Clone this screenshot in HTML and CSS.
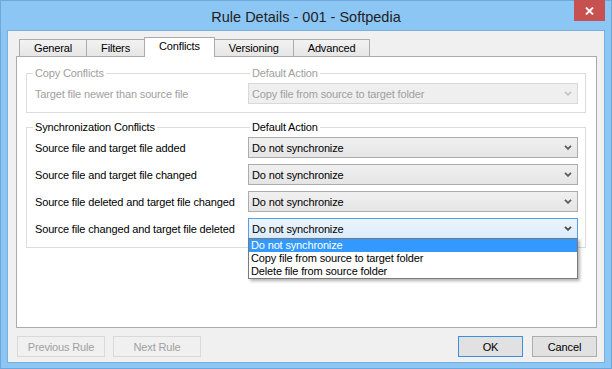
FILE: index.html
```html
<!DOCTYPE html>
<html>
<head>
<meta charset="utf-8">
<link rel="stylesheet" href="styles.css">
</head>
<body>
<div class="window">
  <div class="titlebar">
    <span class="tb-spacer"></span>
    <div class="title">Rule Details - 001 - Softpedia</div>
    <div class="close"><svg width="9" height="8" viewBox="0 0 9 8"><path d="M1 0.5 L8 7.5 M8 0.5 L1 7.5" stroke="#fff" stroke-width="1.8"/></svg></div>
  </div>
  <div class="client">
    <div class="tabs">
      <div class="tab">General</div>
      <div class="tab">Filters</div>
      <div class="tab active">Conflicts</div>
      <div class="tab">Versioning</div>
      <div class="tab">Advanced</div>
    </div>
    <div class="panel">
      <div class="group disabled">
        <div class="group-head"><span class="legend">Copy Conflicts</span><span class="legend col2">Default Action</span></div>
        <div class="row">
          <span class="label">Target file newer than source file</span>
          <div class="combo combo-disabled"><span>Copy file from source to target folder</span><svg class="chev" width="8" height="5" viewBox="0 0 8 5"><polyline points="1,0.8 4,3.8 7,0.8" fill="none" stroke="#c4c4c4" stroke-width="1.8"/></svg></div>
        </div>
      </div>
      <div class="group group2">
        <div class="group-head"><span class="legend">Synchronization Conflicts</span><span class="legend col2">Default Action</span></div>
        <div class="row">
          <span class="label">Source file and target file added</span>
          <div class="combo"><span>Do not synchronize</span><svg class="chev" width="8" height="5" viewBox="0 0 8 5"><polyline points="1,0.8 4,3.8 7,0.8" fill="none" stroke="#5a5a5a" stroke-width="1.8"/></svg></div>
        </div>
        <div class="row">
          <span class="label">Source file and target file changed</span>
          <div class="combo"><span>Do not synchronize</span><svg class="chev" width="8" height="5" viewBox="0 0 8 5"><polyline points="1,0.8 4,3.8 7,0.8" fill="none" stroke="#5a5a5a" stroke-width="1.8"/></svg></div>
        </div>
        <div class="row">
          <span class="label">Source file deleted and target file changed</span>
          <div class="combo"><span>Do not synchronize</span><svg class="chev" width="8" height="5" viewBox="0 0 8 5"><polyline points="1,0.8 4,3.8 7,0.8" fill="none" stroke="#5a5a5a" stroke-width="1.8"/></svg></div>
        </div>
        <div class="row">
          <span class="label">Source file changed and target file deleted</span>
          <div class="combo combo-open"><span>Do not synchronize</span><svg class="chev" width="8" height="5" viewBox="0 0 8 5"><polyline points="1,0.8 4,3.8 7,0.8" fill="none" stroke="#4a4a4a" stroke-width="1.8"/></svg>
            <ul class="dropdown">
              <li class="selected">Do not synchronize</li>
              <li>Copy file from source to target folder</li>
              <li>Delete file from source folder</li>
            </ul>
          </div>
        </div>
      </div>
    </div>
    <div class="buttons">
      <button class="btn btn-wide" disabled>Previous Rule</button>
      <button class="btn btn-wide" disabled>Next Rule</button>
      <span class="btn-spacer"></span>
      <button class="btn btn-default">OK</button>
      <button class="btn">Cancel</button>
    </div>
  </div>
</div>
</body>
</html>
```
FILE: styles.css
```css
html, body {
  margin: 0;
  padding: 0;
  background: #8cc6f5;
}
body {
  font-family: "Liberation Sans", Arial, sans-serif;
  font-size: 11px;
  letter-spacing: -0.15px;
  color: #000;
}
.window {
  width: 612px;
  height: 369px;
  box-sizing: border-box;
  border: 1px solid #6fa7dc;
  background: #8cc6f5;
  display: flex;
  flex-direction: column;
}
.titlebar {
  height: 29px;
  flex: none;
  display: grid;
  grid-template-columns: 1fr auto 1fr;
  align-items: start;
}
.title {
  font-size: 14.5px;
  letter-spacing: 0;
  line-height: 20px;
  padding-top: 6px;
  color: #222;
  white-space: nowrap;
}
.close {
  justify-self: end;
  margin-right: 6px;
  margin-top: -1px;
  width: 31px;
  height: 21px;
  background: #c75050;
  display: flex;
  align-items: center;
  justify-content: center;
}
.client {
  flex: 1;
  margin: 0 6px 5px 6px;
  border: 1px solid #7aaedd;
  background: #f0f0f0;
  display: flex;
  flex-direction: column;
  padding: 0 7px 5px 8px;
  min-height: 0;
}
.tabs {
  display: flex;
  align-items: flex-end;
  height: 26px;
  flex: none;
  padding-left: 3px;
  margin-bottom: -1px;
  position: relative;
  z-index: 1;
}
.tab {
  height: 17px;
  box-sizing: border-box;
  border: 1px solid #acacac;
  border-bottom: none;
  background: linear-gradient(#f2f2f2, #e6e6e6);
  padding: 0 14px;
  line-height: 16px;
  margin-bottom: 1px;
  white-space: nowrap;
}
.tab + .tab {
  margin-left: -1px;
}
.tab.active {
  height: 20px;
  background: #fff;
  margin-bottom: 0;
  line-height: 17px;
  padding: 0 14px 2px;
}
.panel {
  flex: 1;
  background: #fff;
  border: 1px solid #acacac;
  padding: 16px 10px 0 9px;
  min-height: 0;
}
.group {
  border: 1px solid #dcdcdc;
  padding: 0 5px 8px 8px;
}
.group2 {
  margin-top: 14px;
}
.group-head {
  display: grid;
  grid-template-columns: 213px 330px;
  margin-top: -8px;
  height: 15px;
  align-items: center;
  line-height: 15px;
}
.legend {
  justify-self: start;
  background: #fff;
  padding: 0 2px;
  margin-left: -2px;
}
.legend.col2 {
  margin-left: 2px;
}
.row {
  display: grid;
  grid-template-columns: 213px 330px;
  align-items: center;
  margin-top: 6px;
}
.group-head + .row {
  margin-top: 2px;
}
.disabled .legend,
.disabled .label {
  color: #a0a0a0;
}
.combo {
  height: 21px;
  box-sizing: border-box;
  border: 1px solid #acacac;
  background: linear-gradient(#f0f0f0, #e5e5e5);
  display: flex;
  align-items: center;
  justify-content: space-between;
  padding: 0 5px 0 3px;
  position: relative;
}
.chev {
  display: block;
}
.combo-disabled {
  border-color: #d9d9d9;
  background: #efefef;
  color: #a0a0a0;
}
.combo-open {
  border-color: #569de5;
  background: linear-gradient(#ecf4fc, #dcecfc);
}
.dropdown {
  position: absolute;
  left: -1px;
  right: -1px;
  top: 19px;
  margin: 0;
  padding: 0;
  list-style: none;
  background: #fff;
  border: 1px solid #7a7a7a;
  box-shadow: 2px 2px 3px rgba(0, 0, 0, 0.3);
}
.dropdown li {
  line-height: 13px;
  padding-left: 2px;
  white-space: nowrap;
}
.dropdown li.selected {
  background: #3399ff;
  color: #fff;
}
.buttons {
  flex: none;
  display: flex;
  gap: 8px;
  margin-top: 8px;
  padding-left: 1px;
}
.btn {
  width: 65px;
  height: 21px;
  box-sizing: border-box;
  border: 1px solid #adadad;
  background: #e1e1e1;
  font-family: "Liberation Sans", Arial, sans-serif;
  font-size: 11px;
  letter-spacing: -0.15px;
  color: #000;
  padding: 0;
  margin: 0;
}
.btn-wide {
  width: 88px;
}
.btn:disabled {
  background: #f0f0f0;
  border-color: #d9d9d9;
  color: #a0a0a0;
}
.btn-default {
  border-color: #3c8fe0;
}
.btn-spacer {
  flex: 1;
}
.btn-spacer + .btn {
  margin-right: 1px;
}
```
